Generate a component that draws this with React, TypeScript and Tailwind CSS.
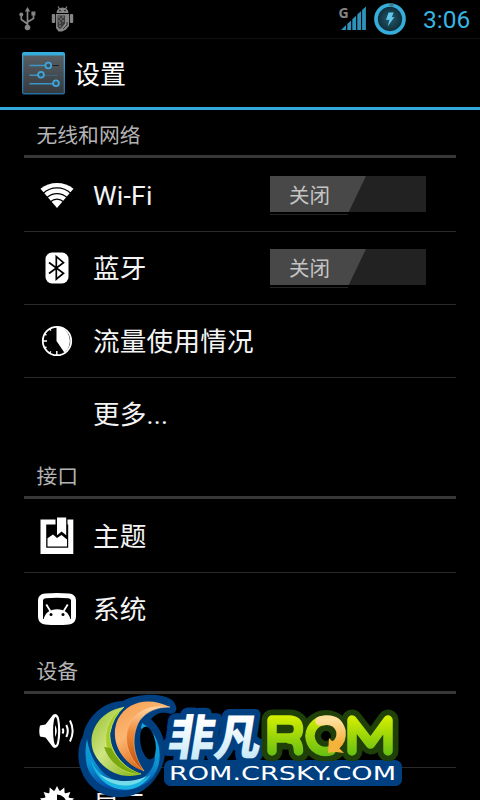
import type { ReactNode } from "react";

function UsbIcon() {
  return (
    <svg width="18" height="24" viewBox="0 0 18 24" fill="none" stroke="#858585" strokeWidth="1.7">
      <path d="M8.500 4v15M8.500 17L2.300 12.500V6M8.500 15l6-3.500V7" />
      <path d="M8.500 0L5.800 4.600h5.400z" fill="#858585" stroke="none" />
      <circle cx="8.500" cy="20.500" r="2.800" fill="#858585" stroke="none" />
      <circle cx="2.300" cy="7.400" r="2" fill="#858585" stroke="none" />
      <path d="M12.400 4.500h4v4h-4z" fill="#858585" stroke="none" />
    </svg>
  );
}

function DebugIcon() {
  return (
    <svg width="24" height="26" viewBox="0 0 24 26" fill="#858585">
      <path d="M5.500 7a6 5.500 0 0 1 12 0z" />
      <path d="M7 0.500l2 3M16 0.500l-2 3" stroke="#858585" strokeWidth="1.200" />
      <rect x="0.800" y="8" width="3.400" height="9" rx="1" />
      <rect x="18.800" y="8" width="3.400" height="9" rx="1" />
      <path d="M5 8h13v12l-3 3.500-4 2H7.500L5 22z" />
      <path d="M6.500 9.500h7.500v8l-4 5H8l-1.500-2z" fill="#3c3c3c" />
      <path d="M7 11h2M11 11h2M9 13h2M7 15h2M11 15h2M8 17h2M8 20h2" stroke="#8c8c8c" strokeWidth="1" />
      <path d="M16 16v3l-4 4" stroke="#333" strokeWidth="1" fill="none" />
      <circle cx="9" cy="4.600" r="0.800" fill="#111" />
      <circle cx="14" cy="4.600" r="0.800" fill="#111" />
    </svg>
  );
}

function SignalIcon() {
  return (
    <svg width="30" height="28" viewBox="0 0 30 28">
      <text x="0.500" y="12.700" fontSize="14" fontWeight="700" fill="#858585" fontFamily="Open Sans, sans-serif">G</text>
      <g fill="#2e93bb">
        <path d="M4 25l5-5v5zM10.300 19l3.800-3.500V25h-3.800zM15.300 14.200l3.800-3.500V25h-3.800zM20.300 9.500l3.800-3.400V25h-3.800zM25.100 5l3.800-3.500V25h-3.800z" transform="translate(-1 0)" />
      </g>
    </svg>
  );
}

function BatteryIcon() {
  return (
    <svg width="34" height="34" viewBox="0 0 34 34">
      <defs>
        <radialGradient id="cell">
          <stop offset="0" stopColor="#25596b" />
          <stop offset="1" stopColor="#0c2a36" />
        </radialGradient>
      </defs>
      <circle cx="17" cy="17" r="14" fill="url(#cell)" stroke="#36addb" strokeWidth="3.700" />
      <path d="M16.500 3h4" stroke="#49727f" strokeWidth="2.500" />
      <path d="M15.500 10.500h5.200l-2 4.700 2.800-.3-6.800 9.600 1.700-6.700-3.400.3z" fill="#5fc8ec" />
    </svg>
  );
}

function SettingsLogo() {
  return (
    <svg width="44" height="44" viewBox="0 0 44 44">
      <defs>
        <linearGradient id="panel" x2="0" y2="1">
          <stop offset="0" stopColor="#585f64" />
          <stop offset="1" stopColor="#343a3e" />
        </linearGradient>
        <linearGradient id="edge" x2="0" y2="1">
          <stop offset="0" stopColor="#36afdf" />
          <stop offset="1" stopColor="#246c9c" />
        </linearGradient>
      </defs>
      <rect x="0" y="1" width="43" height="42.500" rx="2" fill="url(#edge)" />
      <rect x="1.300" y="4.500" width="40.400" height="37.500" fill="url(#panel)" />
      <path d="M28 14.500h9M34 32.800h3" stroke="#202427" strokeWidth="1.200" />
      <path d="M7.500 14.500h16M7.500 24.300h9M7.500 32.800h24" stroke="#3d94c8" strokeWidth="1.500" />
      <path d="M22 24.300h14" stroke="#357096" strokeWidth="0.800" />
      <g fill="#3a4e5b" stroke="#41a5d8" strokeWidth="1.800">
        <circle cx="26.300" cy="14.500" r="2.900" />
        <circle cx="19" cy="23.800" r="2.900" />
        <circle cx="34" cy="32.300" r="2.900" />
      </g>
    </svg>
  );
}

function WifiIcon() {
  return (
    <svg width="34" height="27" viewBox="0 0 34 27">
      <path d="M17 26L.5 6.700C9.500-.8 24.500-.8 33.500 6.700z" fill="#fff" />
      <g fill="none" stroke="#000" strokeWidth="1.300">
        <path d="M3 11.500c8-7.400 20-7.400 28 0" />
        <path d="M6.500 15.800c6.500-5.700 14.500-5.700 21 0" />
        <path d="M10 20c4.500-3.700 9.500-3.700 14 0" />
      </g>
    </svg>
  );
}

function BluetoothIcon() {
  return (
    <svg width="24" height="32" viewBox="0 0 24 32">
      <rect x="0.500" y="0.500" width="23" height="31" rx="6.500" fill="#fff" />
      <path d="M4 10.500l14.500 10.700-7.200 6V4.500l7.200 6.200L4 21.500" fill="none" stroke="#000" strokeWidth="1.700" />
    </svg>
  );
}

function DataUsageIcon() {
  return (
    <svg width="32" height="32" viewBox="0 0 32 32">
      <circle cx="16" cy="16" r="14.200" fill="#000" stroke="#fff" strokeWidth="1.800" />
      <path d="M15.500 1.500V16l8 11.700A15 15 0 0 0 15.500 1.200z" fill="#fff" />
      <path d="M1.500 16h4.500M15.800 30v-4M8.500 3.500l1.300 2.200M3.300 8.800l2.200 1.300M3.300 23.200l2.200-1.300M8.500 28.500l1.300-2.200" stroke="#fff" strokeWidth="1.400" />
    </svg>
  );
}

function ThemeIcon() {
  return (
    <svg width="34" height="38" viewBox="0 0 34 38" fill="#fff">
      <path d="M.5 2.500H15.500v5H6.200v23.200h22V7.500h-.7V2.500h5.800v34.500H.5z" />
      <path d="M17 .5h9.200v17.700l-4.600-3.700-4.600 3.700z" />
      <path d="M7.500 29.500v-8.300l5.500-3.700 4 3.500 4.500-3 5.500 4.500v7z" />
    </svg>
  );
}

function SystemIcon() {
  return (
    <svg width="40" height="34" viewBox="0 0 40 34">
      <path d="M8 1.500Q20 .3 32 1.500 38.500 2 39 8v17q-.5 7-7 7.500-12 1-24 0-6.500-.5-7-7.500V8Q1.500 2 8 1.500z" fill="#fff" />
      <path d="M6 8Q6.500 6.400 9 6.200q11-1 22 0 2.500.2 3 1.800V27H6z" fill="#000" />
      <path d="M6.500 27.700c1.500-7 6-10.500 13.500-10.500s12 3.500 13.500 10.500z" fill="#fff" />
      <path d="M9.300 12.500l4 6.500M30.700 12.500l-4 6.500" stroke="#fff" strokeWidth="1.800" />
      <circle cx="14" cy="22.500" r="1.500" />
      <circle cx="26" cy="22.500" r="1.500" />
    </svg>
  );
}

function SoundIcon() {
  return (
    <svg width="36" height="36" viewBox="0 0 36 36">
      <path d="M1 12.500l5.500-1L14 1.800Q18 -.5 20 5q2.600 13 0 25.500-2 6-6 3.800L6.500 24.500 1 23.500Q-.5 18 1 12.500z" fill="#fff" />
      <ellipse cx="16.600" cy="18" rx="2.500" ry="14" fill="#000" />
      <path d="M16 12q3.500 6 0 12z" fill="#fff" />
      <path d="M23.500 15.500q1.500 2.500 0 5M27.300 12q3 6 0 12M31 7.500q5.300 10.500 0 21" fill="none" stroke="#fff" strokeWidth="2" />
    </svg>
  );
}

function DisplayIcon() {
  return (
    <svg width="36" height="36" viewBox="0 0 36 36">
      <g fill="#fff">
        <path d="M18 0l3 6h-6z" />
        <path d="M18 0l3 6h-6z" transform="rotate(24 18 18)" />
        <path d="M18 0l3 6h-6z" transform="rotate(48 18 18)" />
        <path d="M18 0l3 6h-6z" transform="rotate(72 18 18)" />
        <path d="M18 0l3 6h-6z" transform="rotate(-24 18 18)" />
        <path d="M18 0l3 6h-6z" transform="rotate(-48 18 18)" />
        <path d="M18 0l3 6h-6z" transform="rotate(-72 18 18)" />
      </g>
      <circle cx="18" cy="18" r="11.500" fill="#000" stroke="#fff" strokeWidth="4" />
      <path d="M18 7a11 11 0 0 0 0 22z" fill="#fff" />
    </svg>
  );
}

function Toggle() {
  return (
    <div className="relative mr-[30px] mb-[2px] h-9 w-[156px] bg-[#222]">
      <div className="flex h-9 w-24 items-center bg-[#484848] pt-[5px] pl-[19px] text-[20.500px] text-[#c4c4c4] [clip-path:polygon(0_0,100%_0,82%_100%,0_100%)]">
        关闭
      </div>
      <div className="absolute top-[38px] left-0 h-px w-[78px] bg-[#242424]" />
    </div>
  );
}

function Section({ title, first, children }: { title: string; first?: boolean; children: ReactNode }) {
  return (
    <section className="px-6">
      <h2
        className={`flex items-end border-b-3 border-[#373737] pl-[12.500px] text-[20.800px] leading-[30px] text-[#b4b4b4] ${first ? "h-12" : "h-[49px]"}`}
      >
        <span className="mb-1">{title}</span>
      </h2>
      <div className="divide-y divide-[#2a2a2a] pt-px">{children}</div>
    </section>
  );
}

function Row({ icon, label, toggle }: { icon?: ReactNode; label: string; toggle?: boolean }) {
  return (
    <div className="box-content flex h-[72px] items-center text-[26.600px] text-[#f4f4f4]">
      <div className="flex w-[66px] shrink-0 justify-center">{icon}</div>
      <span className="ml-[3px] flex-1 pt-px tracking-[0.2px] whitespace-nowrap">{label}</span>
      {toggle && <Toggle />}
    </div>
  );
}

// Brand mark: blue ring, green and orange crescents, two lines of lettering
function Watermark() {
  return (
    <svg className="absolute top-[690px] left-[70px]" width="340" height="110" viewBox="70 690 340 110">
      <defs>
        <linearGradient id="green" x2="1" y2="1">
          <stop offset="0" stopColor="#93bd28" />
          <stop offset="0.45" stopColor="#cfe583" />
          <stop offset="1" stopColor="#7fae0c" />
        </linearGradient>
        <linearGradient id="orange" x2="0.6" y2="1">
          <stop offset="0" stopColor="#f29a4c" />
          <stop offset="0.45" stopColor="#fdb671" />
          <stop offset="1" stopColor="#d45a05" />
        </linearGradient>
        <linearGradient id="ember" x2="0" y2="1">
          <stop offset="0" stopColor="#ffd9a8" />
          <stop offset="0.4" stopColor="#f08a3a" />
          <stop offset="1" stopColor="#bb4a04" />
        </linearGradient>
        <linearGradient id="ring" x2="0" y2="1">
          <stop offset="0" stopColor="#12a8e0" />
          <stop offset="0.6" stopColor="#0b93d2" />
          <stop offset="1" stopColor="#0647a5" />
        </linearGradient>
        <linearGradient id="ice" x2="0" y2="1">
          <stop offset="0.3" stopColor="#fff" />
          <stop offset="1" stopColor="#b9e2f6" />
        </linearGradient>
        <linearGradient id="lime" gradientUnits="userSpaceOnUse" x1="0" y1="715" x2="0" y2="757">
          <stop offset="0" stopColor="#d8f000" />
          <stop offset="1" stopColor="#62bd13" />
        </linearGradient>
        <linearGradient id="gold" x2="0" y2="1">
          <stop offset="0" stopColor="#ffdf9c" />
          <stop offset="1" stopColor="#f4ad35" />
        </linearGradient>
      </defs>

      <path d="M123 701C136 693 166 692 174 702Q180 712 171 714C160 711 156 714 151 719C168 735 170 759 155 779C139 801 108 803 91 786C77 772 75 750 83 736C86 718 103 701 123 701z" fill="#003f80" />
      <rect x="164" y="760" width="238" height="26" rx="7" fill="#003f80" />
      <path d="M142 723C164 736 165 768 148 782C126 799 94 790 87 766Q84 752 87 739C91 764 107 783 128 782C155 780 166 752 141 728z" fill="url(#ring)" />
      <path d="M91 760C100 783 132 792 151 774C138 799 99 794 91 760z" fill="#19b5e0" />
      <path d="M99 774C114 783 133 783 147 776C134 790 112 788 99 774z" fill="#74dbe8" />
      <path d="M124 707C97 711 85 737 95 755C105 773 125 780 141 774C122 768 109 750 110 733Q113 717 124 707z" fill="url(#green)" />
      <path d="M124 707C101 719 101 752 117 766Q128 775 141 774C122 768 109 750 110 733Q113 717 124 707z" fill="#a7cd2c" stroke="#d9ef6a" strokeWidth="0.500" />
      <path d="M104 747C110 765 126 774 141 774Q122 769 111 748z" fill="#7ba810" />
      <path d="M170 707C151 697 128 700 118 719C108 741 123 765 144 771C131 755 130 736 138 721Q148 706 170 707z" fill="url(#orange)" />
      <path d="M170 707C147 703 130 715 127 732C124 750 135 765 144 771C131 753 132 733 140 720Q150 707 170 707z" fill="url(#ember)" stroke="#ffc48a" strokeWidth="0.500" />
      <ellipse cx="148" cy="743" rx="7.500" ry="16.500" transform="rotate(-10 148 743)" fill="#000" />

      <g transform="translate(166 755) skewX(-9)" fontFamily="Noto Sans CJK SC, sans-serif" fontWeight="900" fontSize="48" fill="url(#ice)">
        <text x="0" y="0" textLength="93" lengthAdjust="spacingAndGlyphs" stroke="#003f80" strokeWidth="13" strokeLinejoin="round" paintOrder="stroke">
          非凡
        </text>
      </g>

      <g fill="none" strokeLinecap="round" strokeLinejoin="round">
        <g stroke="#1f4008" strokeWidth="21">
          <path d="M272 751V720h17q10 0 10 9.500t-10 9.500h-16M289 739q10 0 10 12M352 751V720l19 24 17-24V751" />
          <circle cx="326" cy="736" r="15.500" />
        </g>
        <g stroke="url(#lime)" strokeWidth="9.500">
          <path d="M272 751V720h17q9.500 0 9.500 9t-9.500 9h-15M289 739q9.500 0 9.500 12" />
          <path d="M352 751V720l18.500 24 17.500-24V751" />
          <path d="M325 720.500a15.500 15.500 0 1 0 6 30" />
        </g>
        <path d="M320 721q17-4 21 10 1 9-5 14" stroke="url(#gold)" strokeWidth="9.500" />
      </g>
      <path d="M329 738l3 3 6-1 1 8 5 5-8-1-8 1z" fill="#f4b33b" />
      <rect x="164" y="761" width="238" height="25" rx="7" fill="#003f80" />
      <text x="169" y="780" textLength="227" lengthAdjust="spacingAndGlyphs" fontFamily="DejaVu Sans, sans-serif" fontSize="19.500" fill="#fff">
        ROM.CRSKY.COM
      </text>
    </svg>
  );
}

export default function App() {
  return (
    <div className="relative h-[800px] w-[480px] overflow-hidden bg-black font-['Roboto','Noto_Sans_CJK_SC',sans-serif]">
      <header>
        <div className="flex h-[39px] items-center border-b border-[#101010] pl-[19px] pr-[9px]">
          <UsbIcon />
          <div className="ml-[14px]">
            <DebugIcon />
          </div>
          <div className="ml-auto">
            <SignalIcon />
          </div>
          <div className="ml-[5px]">
            <BatteryIcon />
          </div>
          <span className="ml-4 w-[48px] pt-[2px] text-[24.500px] text-[#38b4e3]">3:06</span>
        </div>
        <div className="flex h-[71px] items-center border-b-3 border-[#33a9dc] pl-[22px]">
          <SettingsLogo />
          <h1 className="ml-2 pt-[4px] text-[26px] text-white">设置</h1>
        </div>
      </header>

      <main>
        <Section title="无线和网络" first>
          <Row icon={<WifiIcon />} label="Wi-Fi" toggle />
          <Row icon={<BluetoothIcon />} label="蓝牙" toggle />
          <Row icon={<DataUsageIcon />} label="流量使用情况" />
          <Row label="更多..." />
        </Section>
        <Section title="接口">
          <Row icon={<ThemeIcon />} label="主题" />
          <Row icon={<SystemIcon />} label="系统" />
        </Section>
        <Section title="设备">
          <Row icon={<SoundIcon />} label="" />
          <Row icon={<DisplayIcon />} label="显示" />
        </Section>
      </main>

      <Watermark />
    </div>
  );
}
